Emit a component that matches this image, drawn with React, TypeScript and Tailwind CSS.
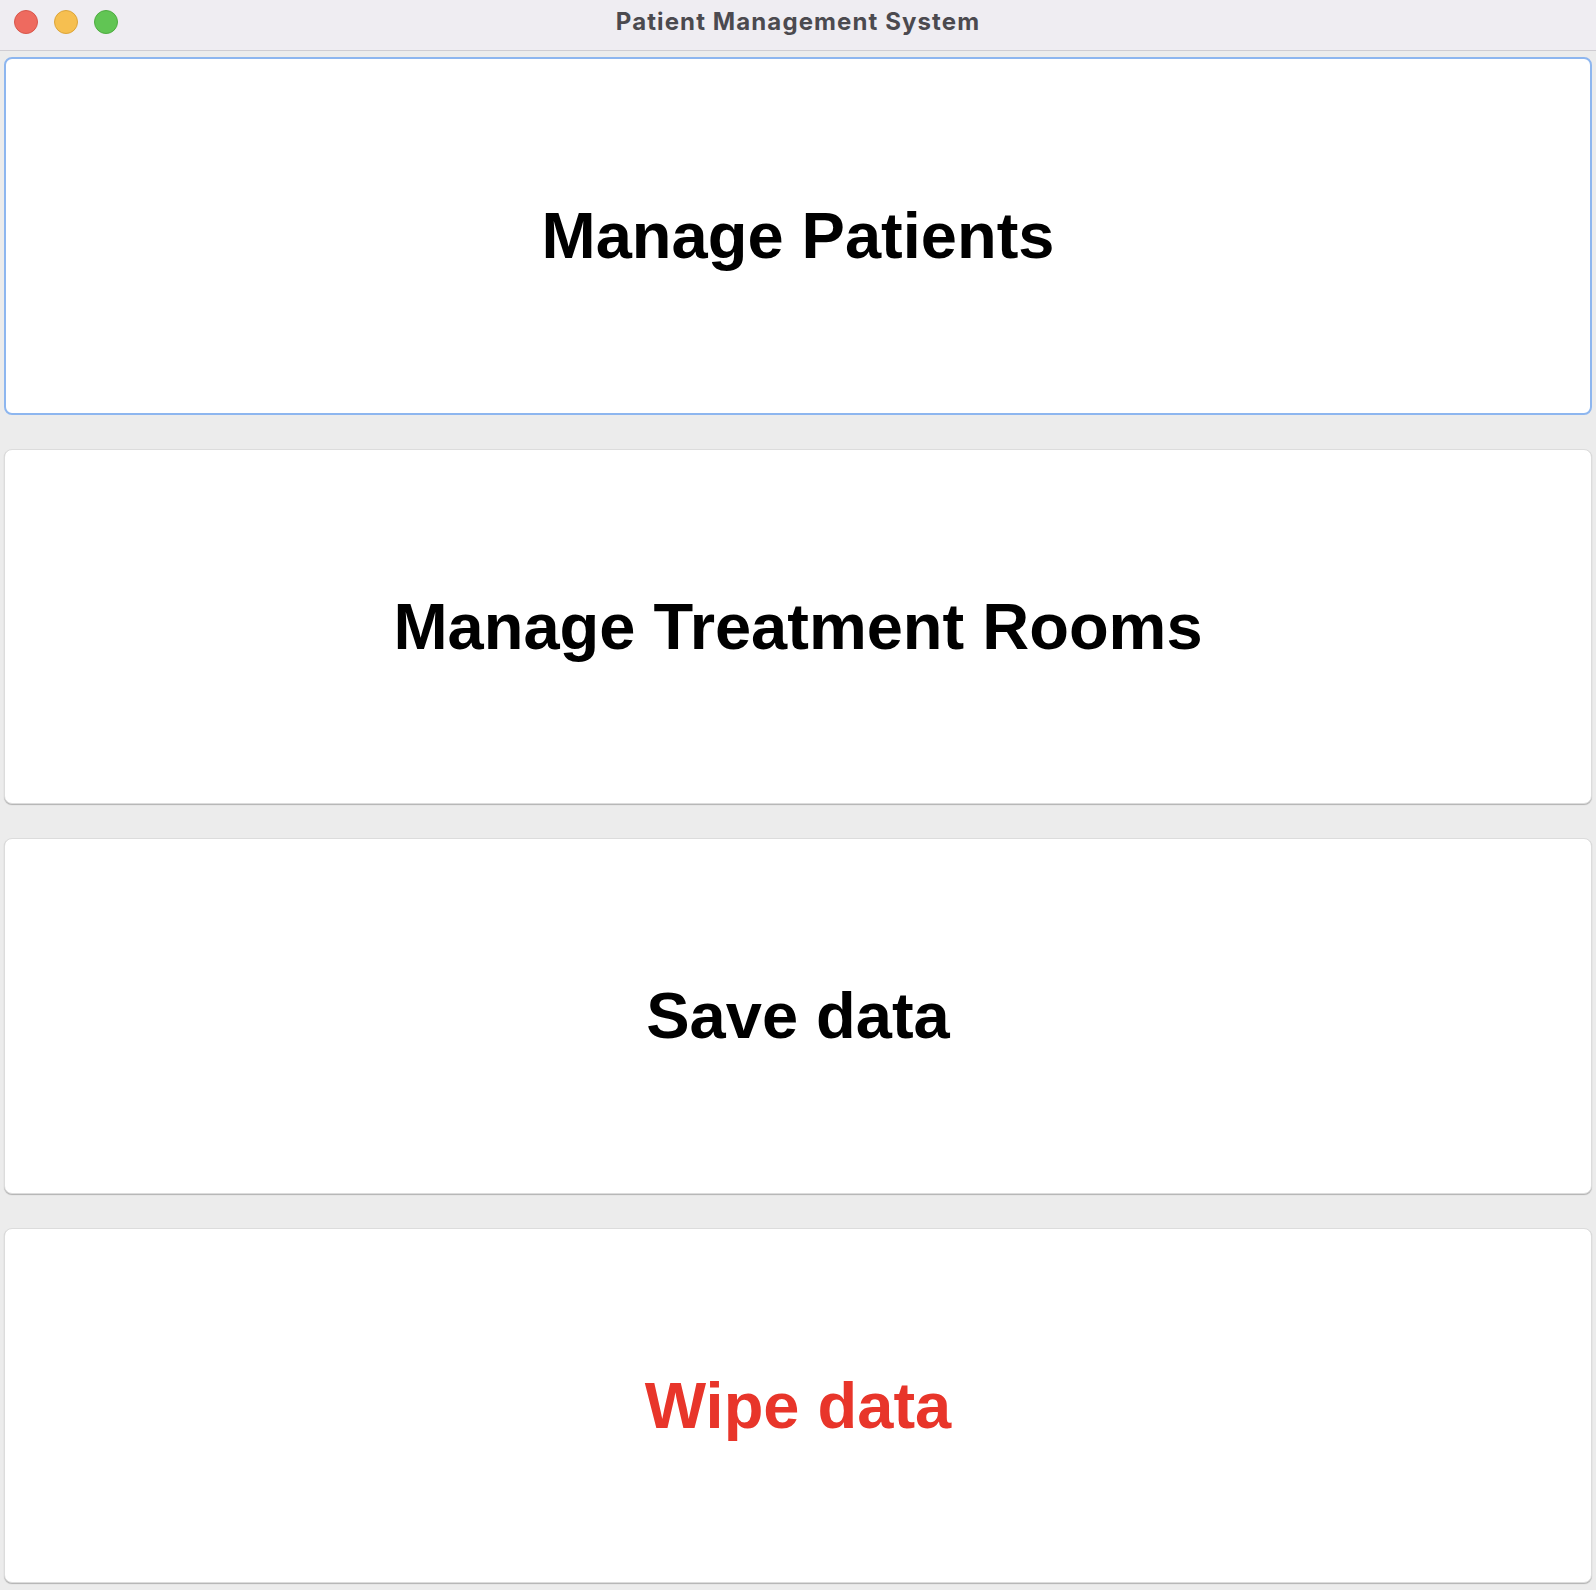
import React from 'react';

const actions = [
  { label: 'Manage Patients', danger: false, focused: true },
  { label: 'Manage Treatment Rooms', danger: false, focused: false },
  { label: 'Save data', danger: false, focused: false },
  { label: 'Wipe data', danger: true, focused: false },
];

export default function App() {
  return (
    <div className="w-[1596px] h-[1590px] flex flex-col bg-[#ececec] overflow-hidden">
      {/* Window title bar */}
      <div className="relative h-[51px] shrink-0 flex items-center justify-center bg-[#efedf2] border-b border-[#cfcdd2]">
        <div className="absolute left-[14px] top-[10px] flex gap-[16px]">
          <span className="w-[24px] h-[24px] rounded-full bg-[#ee6a5f] border border-[#d8564b]" />
          <span className="w-[24px] h-[24px] rounded-full bg-[#f6bf50] border border-[#dca53a]" />
          <span className="w-[24px] h-[24px] rounded-full bg-[#61c554] border border-[#4eac41]" />
        </div>
        <span className="text-[24px] font-bold text-[#4b4a4f] tracking-[1.1px] mt-[-6px]" style={{ fontFamily: 'Inter, "Liberation Sans", sans-serif' }}>
          Patient Management System
        </span>
      </div>

      {/* Menu buttons */}
      <div className="flex-1 flex flex-col gap-[34px] px-[4px] pt-[6px] pb-[7px]">
        {actions.map(a => (
          <button
            key={a.label}
            className={
              a.focused
                ? 'flex-1 flex items-center justify-center rounded-[8px] bg-white border-2 border-[#8db6ef]'
                : 'flex-1 flex items-center justify-center rounded-[8px] bg-white border border-[#dcdcdc] shadow-[0_1px_1px_rgba(0,0,0,0.25)]'
            }
          >
            <span
              className={a.danger ? 'text-[65px] font-bold text-[#e8352a]' : 'text-[65px] font-bold text-black'}
              style={{ fontFamily: '"Liberation Sans", Arial, sans-serif' }}
            >
              {a.label}
            </span>
          </button>
        ))}
      </div>
    </div>
  );
}
